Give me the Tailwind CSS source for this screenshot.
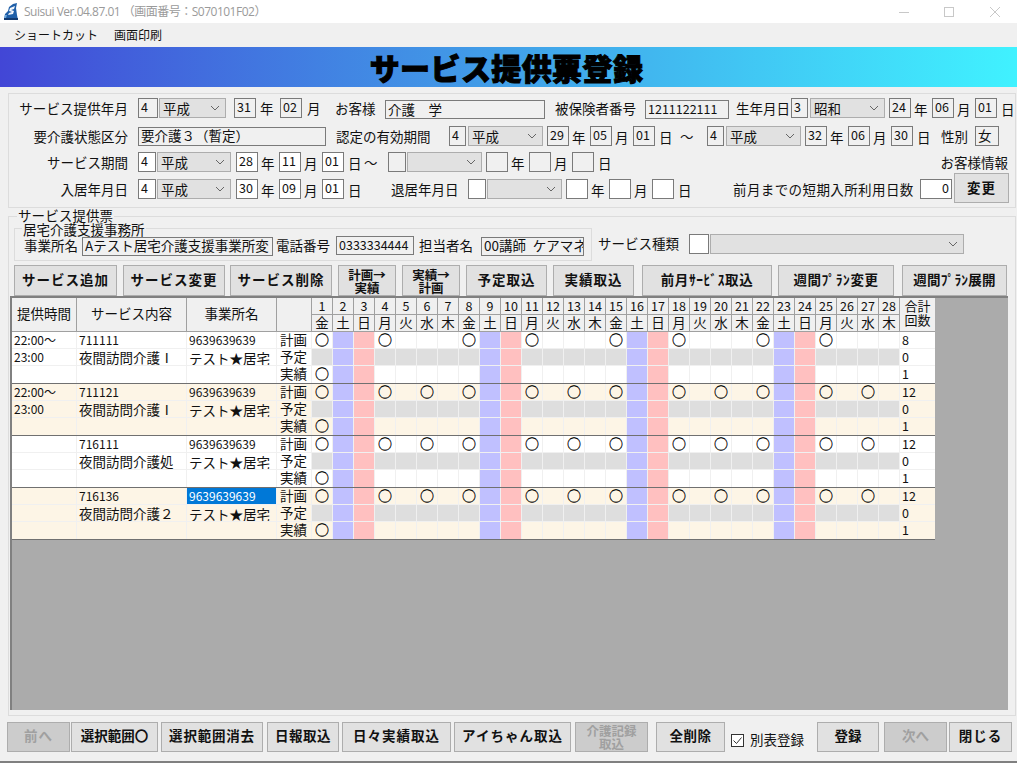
<!DOCTYPE html>
<html>
<head>
    <meta charset="utf-8">
    <title>サービス提供票登録</title>
    <script src="https://cdn.jsdelivr.net/npm/@tailwindcss/browser@4"></script>
</head>
<body class="bg-[#f0f0f0] font-['Noto_Sans_CJK_JP',sans-serif] text-[13.5px] text-[#111] overflow-hidden">
<div class="w-[1017px] h-[763px] flex flex-col overflow-hidden">
    <!-- タイトルバー -->
    <div class="h-[23px] bg-white flex items-center shrink-0">
        <svg class="ml-[3px] w-[16px] h-[18px]" viewBox="0 0 16 18"><path d="M1 17 L2 11 L5 8 L6 4 L10 1 L14 0 L13 5 L14 12 L15 17 Z" fill="#1f5fa8"/><path d="M7 5 L12 3 L11 6 L8 7 L11 8 L10 11 L5 12 L6 10 L9 9 L6 8 Z" fill="#f2f6fb"/><path d="M1 15 L15 15 L15 17 L1 17 Z" fill="#123a70"/><path d="M2 12 L4 12 L3 15 L1 15 Z" fill="#6fa8dc"/></svg>
        <span class="ml-[5px] text-[12px] text-[#9a9a9a] whitespace-nowrap font-['Open_Sans','Noto_Sans_CJK_JP',sans-serif] tracking-[-0.5px]">Suisui Ver.04.87.01 （画面番号：S070101F02）</span>
        <svg class="ml-auto w-[120px] h-[12px] mr-[3px]" viewBox="0 0 120 12" fill="none" stroke="#c8c8c8"><path d="M5 6.5 H15"/><rect x="50.5" y="1.5" width="9" height="9"/><path d="M96 1 L106 11 M106 1 L96 11"/></svg>
    </div>
    <!-- メニュー -->
    <div class="h-[23px] flex items-center text-[12px] shrink-0">
        <span class="ml-[14px] w-[83px] whitespace-nowrap">ショートカット</span>
        <span class="ml-[17px] whitespace-nowrap">画面印刷</span>
    </div>
    <!-- バナー -->
    <div class="mt-[1px] h-[40px] shrink-0 bg-linear-to-r from-[#4246d6] via-[#41a0e8] to-[#40f2ff] flex items-center justify-center">
        <span class="mr-[4px] text-[30px] leading-none font-black text-black tracking-[0.4px] [-webkit-text-stroke:1px_black]">サービス提供票登録</span>
    </div>

    <!-- お客様情報パネル -->
    <div class="mt-[6px] ml-[8px] w-[1008px] h-[115px] shrink-0 border border-[#dcdcdc] pt-[4px] flex flex-col">
        <div class="flex h-[20px] items-center whitespace-nowrap">
            <span class="w-[119px] text-right tracking-[0.1px]">サービス提供年月</span>
            <div class="ml-[10px] w-[20px] h-[20px] border border-[#7a7a7a] pl-[2px] leading-[16px] text-[12.5px]">4</div>
            <div class="ml-[1px] w-[67px] h-[20px] border border-[#adadad] bg-[#e1e1e1] pl-[3px] leading-[17px] flex justify-between items-center">平成<svg class="w-[10px] h-[6px] mr-[5px]" viewBox="0 0 10 6" fill="none" stroke="#666"><path d="M1 1 L5 5 L9 1"/></svg></div>
            <div class="ml-[8px] w-[22px] h-[20px] border border-[#7a7a7a] pl-[2px] leading-[16px] text-[12.5px]">31</div>
            <span class="ml-[4px] w-[13px]">年</span>
            <div class="ml-[7px] w-[22px] h-[20px] border border-[#7a7a7a] pl-[2px] leading-[16px] text-[12.5px]">02</div>
            <span class="ml-[5px] w-[13px]">月</span>
            <span class="ml-[15px] w-[41px]">お客様</span>
            <div class="ml-[9px] w-[160px] h-[19px] mt-[3px] border border-[#7a7a7a] pl-[2px] leading-[16px]">介護　学</div>
            <span class="ml-[10px] w-[82px]">被保険者番号</span>
            <div class="ml-[8px] w-[84px] h-[19px] mt-[3px] border border-[#7a7a7a] pl-[2px] leading-[16px] text-[12.5px]">1211122111</div>
            <span class="ml-[7px] w-[52px]">生年月日</span>
            <div class="ml-[3px] w-[17px] h-[20px] border border-[#7a7a7a] pl-[2px] leading-[16px] text-[12.5px]">3</div>
            <div class="ml-[2px] w-[75px] h-[20px] border border-[#adadad] bg-[#e1e1e1] pl-[3px] leading-[17px] flex justify-between items-center">昭和<svg class="w-[10px] h-[6px] mr-[5px]" viewBox="0 0 10 6" fill="none" stroke="#666"><path d="M1 1 L5 5 L9 1"/></svg></div>
            <div class="ml-[4px] w-[22px] h-[20px] border border-[#7a7a7a] pl-[2px] leading-[16px] text-[12.5px]">24</div>
            <span class="ml-[3px] w-[13px] mt-[3px]">年</span>
            <div class="ml-[5px] w-[22px] h-[20px] border border-[#7a7a7a] pl-[2px] leading-[16px] text-[12.5px]">06</div>
            <span class="ml-[3px] w-[12px] mt-[3px]">月</span>
            <div class="ml-[6px] w-[22px] h-[20px] border border-[#7a7a7a] pl-[2px] leading-[16px] text-[12.5px]">01</div>
            <span class="ml-[4px] w-[11px] mt-[3px]">日</span>
        </div>
        <div class="flex h-[20px] mt-[8px] items-center whitespace-nowrap">
            <span class="w-[119px] text-right">要介護状態区分</span>
            <div class="ml-[10px] w-[188px] h-[19px] border border-[#7a7a7a] pl-[2px] leading-[15px]">要介護３（暫定）</div>
            <span class="ml-[10px] w-[97px]">認定の有効期間</span>
            <div class="ml-[16px] w-[17px] h-[20px] border border-[#7a7a7a] pl-[2px] leading-[16px] text-[12.5px]">4</div>
            <div class="ml-[2px] w-[75px] h-[20px] border border-[#adadad] bg-[#e1e1e1] pl-[3px] leading-[17px] flex justify-between items-center">平成<svg class="w-[10px] h-[6px] mr-[5px]" viewBox="0 0 10 6" fill="none" stroke="#666"><path d="M1 1 L5 5 L9 1"/></svg></div>
            <div class="ml-[4px] w-[22px] h-[20px] border border-[#7a7a7a] pl-[2px] leading-[16px] text-[12.5px]">29</div>
            <span class="ml-[3px] w-[13px] mt-[3px]">年</span>
            <div class="ml-[5px] w-[22px] h-[20px] border border-[#7a7a7a] pl-[2px] leading-[16px] text-[12.5px]">05</div>
            <span class="ml-[3px] w-[12px] mt-[3px]">月</span>
            <div class="ml-[6px] w-[22px] h-[20px] border border-[#7a7a7a] pl-[2px] leading-[16px] text-[12.5px]">01</div>
            <span class="ml-[4px] w-[11px] mt-[3px]">日</span>
            <span class="ml-[10px] w-[12px]">～</span>
            <div class="ml-[15px] w-[17px] h-[20px] border border-[#7a7a7a] pl-[2px] leading-[16px] text-[12.5px]">4</div>
            <div class="ml-[2px] w-[75px] h-[20px] border border-[#adadad] bg-[#e1e1e1] pl-[3px] leading-[17px] flex justify-between items-center">平成<svg class="w-[10px] h-[6px] mr-[5px]" viewBox="0 0 10 6" fill="none" stroke="#666"><path d="M1 1 L5 5 L9 1"/></svg></div>
            <div class="ml-[4px] w-[22px] h-[20px] border border-[#7a7a7a] pl-[2px] leading-[16px] text-[12.5px]">32</div>
            <span class="ml-[3px] w-[13px] mt-[3px]">年</span>
            <div class="ml-[5px] w-[22px] h-[20px] border border-[#7a7a7a] pl-[2px] leading-[16px] text-[12.5px]">06</div>
            <span class="ml-[3px] w-[12px] mt-[3px]">月</span>
            <div class="ml-[6px] w-[22px] h-[20px] border border-[#7a7a7a] pl-[2px] leading-[16px] text-[12.5px]">30</div>
            <span class="ml-[4px] w-[11px] mt-[3px]">日</span>
            <span class="ml-[13px] w-[27px]">性別</span>
            <div class="ml-[7px] w-[24px] h-[20px] border border-[#7a7a7a] pl-[2px] leading-[17px]">女</div>
        </div>
        <div class="flex h-[20px] mt-[6px] items-center whitespace-nowrap">
            <span class="w-[119px] text-right">サービス期間</span>
            <div class="ml-[10px] w-[18px] h-[20px] border border-[#7a7a7a] bg-white pl-[2px] leading-[16px] text-[12.5px]">4</div>
            <div class="ml-[1px] w-[74px] h-[20px] border border-[#adadad] bg-[#e1e1e1] pl-[3px] leading-[17px] flex justify-between items-center">平成<svg class="w-[10px] h-[6px] mr-[5px]" viewBox="0 0 10 6" fill="none" stroke="#666"><path d="M1 1 L5 5 L9 1"/></svg></div>
            <div class="ml-[5px] w-[22px] h-[20px] border border-[#7a7a7a] bg-white pl-[2px] leading-[16px] text-[12.5px]">28</div>
            <span class="ml-[3px] w-[12px] mt-[3px]">年</span>
            <div class="ml-[6px] w-[22px] h-[20px] border border-[#7a7a7a] bg-white pl-[2px] leading-[16px] text-[12.5px]">11</div>
            <span class="ml-[3px] w-[12px] mt-[3px]">月</span>
            <div class="ml-[6px] w-[22px] h-[20px] border border-[#7a7a7a] bg-white pl-[2px] leading-[16px] text-[12.5px]">01</div>
            <span class="ml-[4px] w-[10px] mt-[3px]">日</span>
            <span class="ml-[6px] w-[13px]">～</span>
            <div class="ml-[11px] w-[18px] h-[20px] border border-[#7a7a7a]"></div>
            <div class="ml-[1px] w-[75px] h-[20px] border border-[#adadad] bg-[#e1e1e1] flex justify-end items-center"><svg class="w-[10px] h-[6px] mr-[5px]" viewBox="0 0 10 6" fill="none" stroke="#666"><path d="M1 1 L5 5 L9 1"/></svg></div>
            <div class="ml-[4px] w-[22px] h-[20px] border border-[#7a7a7a]"></div>
            <span class="ml-[3px] w-[12px] mt-[3px]">年</span>
            <div class="ml-[6px] w-[22px] h-[20px] border border-[#7a7a7a]"></div>
            <span class="ml-[3px] w-[12px] mt-[3px]">月</span>
            <div class="ml-[6px] w-[22px] h-[20px] border border-[#7a7a7a]"></div>
            <span class="ml-[4px] w-[10px] mt-[3px]">日</span>
            <span class="ml-auto mr-[7px] mt-[1px]">お客様情報</span>
        </div>
        <div class="flex h-[20px] mt-[7px] items-center whitespace-nowrap">
            <span class="w-[119px] text-right">入居年月日</span>
            <div class="ml-[10px] w-[18px] h-[20px] border border-[#7a7a7a] bg-white pl-[2px] leading-[16px] text-[12.5px]">4</div>
            <div class="ml-[1px] w-[74px] h-[20px] border border-[#adadad] bg-[#e1e1e1] pl-[3px] leading-[17px] flex justify-between items-center">平成<svg class="w-[10px] h-[6px] mr-[5px]" viewBox="0 0 10 6" fill="none" stroke="#666"><path d="M1 1 L5 5 L9 1"/></svg></div>
            <div class="ml-[5px] w-[22px] h-[20px] border border-[#7a7a7a] bg-white pl-[2px] leading-[16px] text-[12.5px]">30</div>
            <span class="ml-[3px] w-[12px] mt-[3px]">年</span>
            <div class="ml-[6px] w-[22px] h-[20px] border border-[#7a7a7a] bg-white pl-[2px] leading-[16px] text-[12.5px]">09</div>
            <span class="ml-[3px] w-[12px] mt-[3px]">月</span>
            <div class="ml-[6px] w-[22px] h-[20px] border border-[#7a7a7a] bg-white pl-[2px] leading-[16px] text-[12.5px]">01</div>
            <span class="ml-[4px] w-[10px] mt-[3px]">日</span>
            <span class="ml-[33px] w-[67px]">退居年月日</span>
            <div class="ml-[10px] w-[18px] h-[20px] border border-[#7a7a7a] bg-white"></div>
            <div class="ml-[1px] w-[75px] h-[20px] border border-[#adadad] bg-[#e1e1e1] flex justify-end items-center"><svg class="w-[10px] h-[6px] mr-[5px]" viewBox="0 0 10 6" fill="none" stroke="#666"><path d="M1 1 L5 5 L9 1"/></svg></div>
            <div class="ml-[4px] w-[22px] h-[20px] border border-[#7a7a7a] bg-white"></div>
            <span class="ml-[3px] w-[12px] mt-[3px]">年</span>
            <div class="ml-[6px] w-[22px] h-[20px] border border-[#7a7a7a] bg-white"></div>
            <span class="ml-[3px] w-[12px] mt-[3px]">月</span>
            <div class="ml-[6px] w-[22px] h-[20px] border border-[#7a7a7a] bg-white"></div>
            <span class="ml-[4px] w-[10px] mt-[3px]">日</span>
            <span class="ml-[45px] w-[181px] tracking-[0.4px]">前月までの短期入所利用日数</span>
            <div class="ml-[6px] w-[32px] h-[20px] border border-[#7a7a7a] bg-white pr-[2px] text-right leading-[16px] text-[12.5px]">0</div>
            <button class="ml-[2px] w-[55px] h-[30px] -mt-[2px] pb-[2px] border border-[#adadad] bg-[#e1e1e1] font-bold tracking-[1px]">変更</button>
        </div>
    </div>

    <!-- サービス提供票 -->
    <div class="relative mt-[8px] ml-[8px] w-[1008px] h-[500px] shrink-0 border border-[#dcdcdc] flex flex-col">
        <span class="absolute left-[8px] -top-[9px] bg-[#f0f0f0] px-[1px] leading-[14px] whitespace-nowrap tracking-[0.1px]">サービス提供票</span>
        <div class="mt-[11px] h-[33px] flex items-start whitespace-nowrap">
            <div class="relative ml-[5px] w-[578px] h-[33px] border border-[#dcdcdc] flex items-start">
                <span class="absolute left-[7px] -top-[6px] bg-[#f0f0f0] px-[1px] leading-[13px]">居宅介護支援事務所</span>
                <span class="ml-[9px] w-[54px] mt-[7px] leading-[18px]">事業所名</span>
                <div class="ml-[4px] w-[191px] h-[19px] mt-[8px] border border-[#7a7a7a] pl-[2px] leading-[15px] overflow-hidden">Aテスト居宅介護支援事業所変</div>
                <span class="ml-[3px] w-[54px] mt-[7px] leading-[18px]">電話番号</span>
                <div class="ml-[6px] w-[78px] h-[19px] mt-[7px] border border-[#7a7a7a] pl-[2px] leading-[15px] text-[12.5px]">0333334444</div>
                <span class="ml-[5px] w-[55px] mt-[7px] leading-[18px]">担当者名</span>
                <div class="ml-[7px] w-[103px] h-[19px] mt-[8px] border border-[#7a7a7a] pl-[2px] leading-[15px] overflow-hidden">00講師&ensp;ケアマネ</div>
            </div>
            <span class="ml-[6px] w-[82px] mt-[6px] leading-[18px]">サービス種類</span>
            <div class="ml-[9px] w-[20px] h-[20px] mt-[6px] border border-[#7a7a7a] bg-white"></div>
            <div class="ml-[1px] w-[254px] h-[20px] mt-[6px] border border-[#adadad] bg-[#e1e1e1] flex justify-end items-center"><svg class="w-[10px] h-[6px] mr-[5px]" viewBox="0 0 10 6" fill="none" stroke="#666"><path d="M1 1 L5 5 L9 1"/></svg></div>
        </div>
        <div class="mt-[4px] h-[31px] flex font-bold whitespace-nowrap">
            <button class="ml-[5px] w-[103px] pb-[2px] border border-[#adadad] bg-[#e1e1e1] tracking-[1px]">サービス追加</button>
            <button class="ml-[6px] w-[102px] pb-[2px] border border-[#adadad] bg-[#e1e1e1] tracking-[1px]">サービス変更</button>
            <button class="ml-[5px] w-[102px] pb-[2px] border border-[#adadad] bg-[#e1e1e1] tracking-[1px]">サービス削除</button>
            <button class="ml-[6px] w-[58px] border border-[#adadad] bg-[#e1e1e1] text-[12.5px] leading-[13px]">計画→<br>実績</button>
            <button class="ml-[6px] w-[58px] border border-[#adadad] bg-[#e1e1e1] text-[12.5px] leading-[13px]">実績→<br>計画</button>
            <button class="ml-[6px] w-[81px] pb-[2px] border border-[#adadad] bg-[#e1e1e1] tracking-[1px]">予定取込</button>
            <button class="ml-[6px] w-[81px] pb-[2px] border border-[#adadad] bg-[#e1e1e1] tracking-[1px]">実績取込</button>
            <button class="ml-[8px] w-[130px] pb-[2px] border border-[#adadad] bg-[#e1e1e1] tracking-[0.6px]">前月ｻｰﾋﾞｽ取込</button>
            <button class="ml-[6px] w-[116px] pb-[2px] border border-[#adadad] bg-[#e1e1e1] tracking-[0.6px]">週間ﾌﾟﾗﾝ変更</button>
            <button class="ml-[8px] w-[105px] pb-[2px] border border-[#adadad] bg-[#e1e1e1] tracking-[0.2px]">週間ﾌﾟﾗﾝ展開</button>
        </div>
        <!-- グリッド -->
        <div class="ml-[1px] w-[998px] h-[414px] bg-[#ababab] border-t-2 border-l-2 border-[#808080]">
            <div id="grid" class="w-[923px]"></div>
        </div>
    </div>

    <!-- 下部ボタン -->
    <div class="mt-[6px] h-[30px] shrink-0 flex font-bold whitespace-nowrap">
        <button class="ml-[7px] w-[63px] pb-[3px] border border-[#adadad] bg-[#cccccc] text-[#a0a0a0] tracking-[1px]">前へ</button>
        <button class="ml-[1px] w-[87px] pb-[3px] border border-[#adadad] bg-[#e1e1e1]">選択範囲〇</button>
        <button class="ml-[3px] w-[102px] pb-[3px] border border-[#adadad] bg-[#e1e1e1] tracking-[0.8px]">選択範囲消去</button>
        <button class="ml-[4px] w-[72px] pb-[3px] border border-[#adadad] bg-[#e1e1e1] tracking-[0.5px]">日報取込</button>
        <button class="ml-[3px] w-[109px] pb-[3px] border border-[#adadad] bg-[#e1e1e1] tracking-[1px]">日々実績取込</button>
        <button class="ml-[3px] w-[117px] pb-[3px] border border-[#adadad] bg-[#e1e1e1] tracking-[1px]">アイちゃん取込</button>
        <button class="ml-[4px] w-[73px] border border-[#adadad] bg-[#cccccc] text-[#a0a0a0] text-[12.5px] leading-[13px]">介護記録<br>取込</button>
        <button class="ml-[8px] w-[69px] pb-[3px] border border-[#adadad] bg-[#e1e1e1] tracking-[0.5px]">全削除</button>
        <div class="ml-[6px] mt-[12px] w-[13px] h-[13px] border border-[#333] bg-white flex items-center justify-center"><svg class="w-[11px] h-[11px]" viewBox="0 0 11 11" fill="none" stroke="#333"><path d="M1.5 5.5 L4.5 8.5 L9.5 2.5"/></svg></div>
        <span class="ml-[6px] w-[55px] mt-[8px] font-normal leading-[18px]">別表登録</span>
        <button class="ml-[12px] w-[62px] pb-[3px] border border-[#adadad] bg-[#e1e1e1]">登録</button>
        <button class="ml-[5px] w-[63px] pb-[3px] border border-[#adadad] bg-[#cccccc] text-[#a0a0a0]">次へ</button>
        <button class="ml-[2px] w-[63px] pb-[3px] border border-[#adadad] bg-[#e1e1e1] tracking-[1px]">閉じる</button>
    </div>
    <div class="mt-auto h-[2px] bg-[#808080] shrink-0"></div>
</div>

<script>
    const weekdays = ['金','土','日','月','火','水','木'];
    const plan8 = [1,4,8,11,15,18,22,25];
    const plan12 = [1,4,6,8,11,13,15,18,20,22,25,27];
    const services = [
        { t1:'22:00～', t2:'23:00', code:'711111', name:'夜間訪問介護Ⅰ', plan:plan8, total:8, bg:'bg-white' },
        { t1:'22:00～', t2:'23:00', code:'711121', name:'夜間訪問介護Ⅰ', plan:plan12, total:12, bg:'bg-[#fdf5e6]' },
        { t1:'', t2:'', code:'716111', name:'夜間訪問介護処', plan:plan12, total:12, bg:'bg-white' },
        { t1:'', t2:'', code:'716136', name:'夜間訪問介護２', plan:plan12, total:12, bg:'bg-[#fdf5e6]', selected:true }
    ];
    const cols = 'grid grid-cols-[64px_109px_89px_34px_repeat(28,20px)_35px] gap-px';

    function buildHeader() {
        let html = `<div class="${cols} grid-rows-[16px_16px] bg-[#a0a0a0] border-b border-[#a0a0a0] text-center whitespace-nowrap">`;
        ['提供時間','サービス内容','事業所名',''].forEach(h => {
            html += `<div class="row-span-2 bg-[#f0f0f0] flex items-center justify-center pb-[2px]">${h}</div>`;
        });
        for (let d = 1; d <= 28; d++) html += `<div class="bg-[#f0f0f0] leading-[15px] text-[12.5px]">${d}</div>`;
        html += `<div class="row-span-2 bg-[#f0f0f0] text-[13px] leading-[14px] pt-[1px]">合計<br>回数</div>`;
        for (let d = 1; d <= 28; d++) html += `<div class="bg-[#f0f0f0] leading-[14px]">${weekdays[(d - 1) % 7]}</div>`;
        return html + '</div>';
    }

    function buildGroup(s) {
        const labels = ['計画','予定','実績'];
        let html = `<div class="${cols} grid-rows-[16px_16px_17px] bg-[#f0f0f0] border-b border-[#707070] whitespace-nowrap">`;
        labels.forEach((label, r) => {
            const time = r === 0 ? s.t1 : r === 1 ? s.t2 : '';
            const text = r === 0 ? s.code : r === 1 ? s.name : '';
            const office = r === 0 ? '9639639639' : r === 1 ? 'テスト★居宅' : '';
            const total = r === 0 ? s.total : r === 1 ? 0 : 1;
            const sel = r === 0 && s.selected;
            html += `<div class="${s.bg} pl-[2px] leading-[15px] text-[12px] overflow-hidden">${time}</div>`;
            html += `<div class="${s.bg} pl-[2px] overflow-hidden ${r === 0 ? 'leading-[15px] text-[12px]' : 'leading-[17px]'}">${text}</div>`;
            html += `<div class="${sel ? 'bg-[#0078d7] text-white' : s.bg} pl-[2px] overflow-hidden ${r === 0 ? 'leading-[15px] text-[12px]' : 'leading-[19px]'}">${office}</div>`;
            html += `<div class="${s.bg} pl-[3px] leading-[14px]">${label}</div>`;
            for (let d = 1; d <= 28; d++) {
                const wd = (d - 1) % 7;
                let bg = s.bg;
                if (wd === 1) bg = 'bg-[#c0c0ff]';
                else if (wd === 2) bg = 'bg-[#ffc0c0]';
                else if (r === 1) bg = 'bg-[#dedede]';
                const mark = wd > 2 || wd === 0 ? ((r === 0 && s.plan.includes(d)) || (r === 2 && d === 1) ? '○' : '') : '';
                html += `<div class="${bg} text-center leading-[15px] text-[14px] text-black [-webkit-text-stroke:0.3px_black]">${mark}</div>`;
            }
            html += `<div class="${s.bg} pl-[2px] leading-[15px] text-[12.5px]">${total}</div>`;
        });
        return html + '</div>';
    }

    document.getElementById('grid').innerHTML = buildHeader() + services.map(buildGroup).join('');
</script>
</body>
</html>
